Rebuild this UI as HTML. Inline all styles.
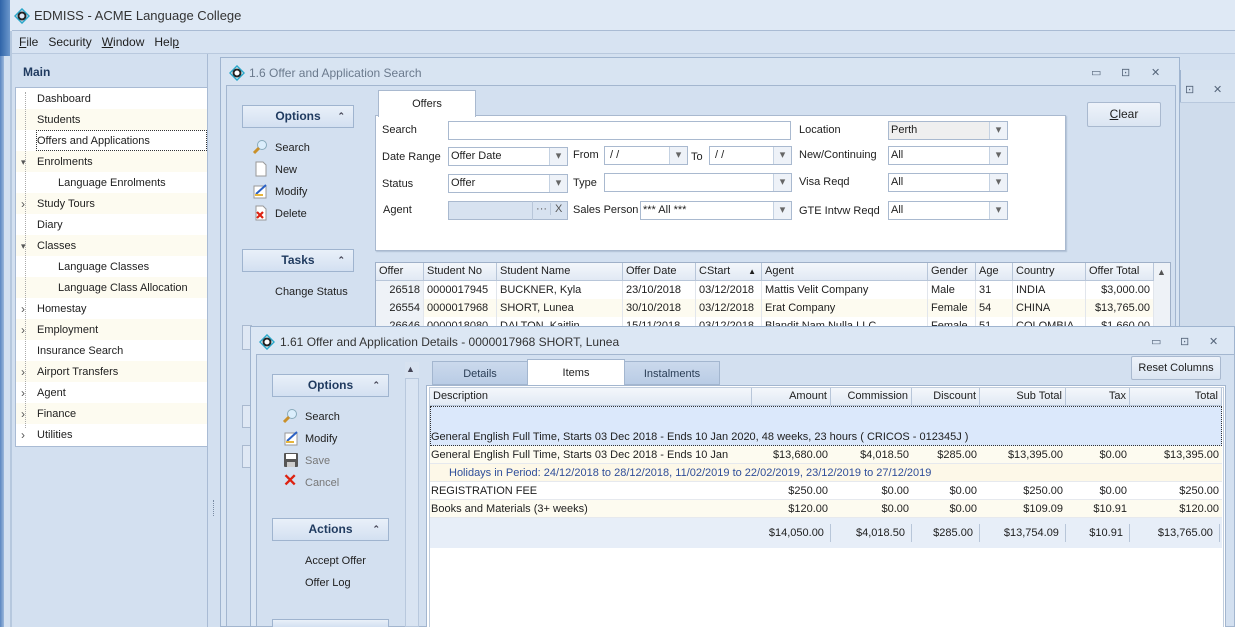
<!DOCTYPE html>
<html><head><meta charset="utf-8"><style>
*{box-sizing:border-box;margin:0;padding:0}
html{overflow:hidden;width:1235px;height:627px}
body{width:1235px;height:627px;overflow:hidden;background:#d3e0f0;font-family:"Liberation Sans",sans-serif;font-size:11px;color:#1e1e1e;position:relative}
.a{position:absolute;white-space:nowrap}
.t{position:absolute;white-space:nowrap;line-height:14px}
.hdr{position:absolute;background:linear-gradient(#e9f0f9,#d3e0f1);border:1px solid #9fb4cf;font-weight:bold;color:#1f3a5f;text-align:center;line-height:20px;font-size:12px}
.hdr span{position:absolute;right:8px;top:0;font-size:9px;color:#445}
.in{position:absolute;background:#fff;border:1px solid #a9b9cf;height:19px;line-height:17px;padding-left:2px}
.cb:after{content:"▾";position:absolute;right:0;top:0;width:17px;height:17px;border-left:1px solid #c5d2e2;background:#eef2f8;text-align:center;color:#666;font-size:11px}
.grid{position:absolute;background:#fff;border:1px solid #9fb0c8}
.gh{position:absolute;height:18px;line-height:17px;background:linear-gradient(#f4f7fb,#e1e9f4);border-right:1px solid #b8c6d9;border-bottom:1px solid #b8c6d9;padding:0 3px;overflow:hidden}
.c{position:absolute;height:18px;line-height:18px;padding:0 3px;border-right:1px solid #e2e6ec;overflow:hidden}
.r{text-align:right}
.icon{position:absolute;width:16px;height:16px}
.wb{position:absolute;color:#55657a;font-size:11px}
</style></head><body>
<div class="a" style="left:0;top:0;width:1235px;height:31px;background:#dfe9f5"></div>
<div class="a" style="left:0;top:0;width:10px;height:56px;background:linear-gradient(90deg,#2f64a8,#6b97cc)"></div>
<div class="a" style="left:0;top:56px;width:4px;height:571px;background:linear-gradient(90deg,#5a86c0,#9cb8dc)"></div>
<div class="a" style="left:10px;top:31px;width:2px;height:596px;background:#b6c8de"></div>
<svg class="a" style="left:14px;top:8px" width="16" height="16" viewBox="0 0 16 16"><path d="M8 1L15 8L8 15L1 8Z" fill="none" stroke="#2aa7c9" stroke-width="1.5"/><circle cx="8" cy="8" r="3.5" fill="none" stroke="#222" stroke-width="2"/></svg>
<div class="t" style="left:34px;top:9px;font-size:13px;color:#333">EDMISS - ACME Language College</div>
<div class="a" style="left:12px;top:30px;width:1223px;height:24px;background:#d7e3f2;border-top:1px solid #a9bbd4;border-bottom:1px solid #b9c9de"></div>
<div class="t" style="left:19px;top:35px;font-size:12px"><u>F</u>ile&nbsp;&nbsp; Security&nbsp;&nbsp; <u>W</u>indow&nbsp;&nbsp; Hel<u>p</u></div>
<div class="t" style="left:23px;top:65px;font-weight:bold;font-size:12px;color:#1f3a5f">Main</div>
<div class="a" style="left:15px;top:87px;width:193px;height:360px;background:#fff;border:1px solid #a9bbd4"></div>
<div class="a" style="left:16px;top:109px;width:191px;height:21px;background:#fdfbf0"></div>
<div class="a" style="left:16px;top:151px;width:191px;height:21px;background:#fdfbf0"></div>
<div class="a" style="left:16px;top:193px;width:191px;height:21px;background:#fdfbf0"></div>
<div class="a" style="left:16px;top:235px;width:191px;height:21px;background:#fdfbf0"></div>
<div class="a" style="left:16px;top:277px;width:191px;height:21px;background:#fdfbf0"></div>
<div class="a" style="left:16px;top:319px;width:191px;height:21px;background:#fdfbf0"></div>
<div class="a" style="left:16px;top:361px;width:191px;height:21px;background:#fdfbf0"></div>
<div class="a" style="left:16px;top:403px;width:191px;height:21px;background:#fdfbf0"></div>
<div class="a" style="left:25px;top:92px;width:0;height:336px;border-left:1px dotted #aaa"></div>
<div class="a" style="left:36px;top:130px;width:171px;height:21px;border:1px dotted #333"></div>
<div class="t" style="left:37px;top:92px">Dashboard</div>
<div class="t" style="left:37px;top:113px">Students</div>
<div class="t" style="left:37px;top:134px">Offers and Applications</div>
<div class="t" style="left:37px;top:155px">Enrolments</div>
<div class="t" style="left:58px;top:176px">Language Enrolments</div>
<div class="t" style="left:37px;top:197px">Study Tours</div>
<div class="t" style="left:37px;top:218px">Diary</div>
<div class="t" style="left:37px;top:239px">Classes</div>
<div class="t" style="left:58px;top:260px">Language Classes</div>
<div class="t" style="left:58px;top:281px">Language Class Allocation</div>
<div class="t" style="left:37px;top:302px">Homestay</div>
<div class="t" style="left:37px;top:323px">Employment</div>
<div class="t" style="left:37px;top:344px">Insurance Search</div>
<div class="t" style="left:37px;top:365px">Airport Transfers</div>
<div class="t" style="left:37px;top:386px">Agent</div>
<div class="t" style="left:37px;top:407px">Finance</div>
<div class="t" style="left:37px;top:428px">Utilities</div>
<div class="t" style="left:21px;top:155px;font-size:9px;color:#555">▾</div>
<div class="t" style="left:21px;top:239px;font-size:9px;color:#555">▾</div>
<div class="t" style="left:21px;top:197px;font-size:12px;color:#555">›</div>
<div class="t" style="left:21px;top:302px;font-size:12px;color:#555">›</div>
<div class="t" style="left:21px;top:323px;font-size:12px;color:#555">›</div>
<div class="t" style="left:21px;top:365px;font-size:12px;color:#555">›</div>
<div class="t" style="left:21px;top:386px;font-size:12px;color:#555">›</div>
<div class="t" style="left:21px;top:407px;font-size:12px;color:#555">›</div>
<div class="t" style="left:21px;top:428px;font-size:12px;color:#555">›</div>
<div class="a" style="left:207px;top:54px;width:1px;height:573px;background:#a9bbd4"></div>
<div class="a" style="left:213px;top:500px;width:1px;height:16px;border-left:1px dotted #7a8ba3"></div>
<div class="a" style="left:1180px;top:70px;width:55px;height:557px;background:#d6e2f0;border-left:1px solid #9fb4cf"></div>
<div class="wb" style="left:1185px;top:83px">⊡</div><div class="wb" style="left:1213px;top:83px">✕</div>
<div class="a" style="left:1180px;top:102px;width:55px;height:525px;border-top:1px solid #b8c8dd;background:#cfdcec"></div>
<div class="a" style="left:220px;top:57px;width:960px;height:570px;background:#d8e4f2;border:1px solid #9fb4cf"></div>
<svg class="a" style="left:229px;top:65px" width="16" height="16" viewBox="0 0 16 16"><path d="M8 1L15 8L8 15L1 8Z" fill="#fff" stroke="#2aa7c9" stroke-width="1.5"/><circle cx="8" cy="8" r="3.5" fill="none" stroke="#222" stroke-width="2"/></svg>
<div class="t" style="left:249px;top:66px;color:#6b7a8d;font-size:12px">1.6 Offer and Application Search</div>
<div class="wb" style="left:1091px;top:66px">▭</div><div class="wb" style="left:1121px;top:66px">⊡</div><div class="wb" style="left:1151px;top:66px">✕</div>
<div class="a" style="left:226px;top:85px;width:950px;height:542px;background:#d3e0f0;border:1px solid #a3b6cf"></div>
<div class="hdr" style="left:242px;top:105px;width:112px;height:23px">Options<span>⌃</span></div>
<svg class="icon" style="left:252px;top:139px" viewBox="0 0 16 16"><circle cx="10" cy="6" r="4.5" fill="#dbeefc" stroke="#8ab" /><path d="M7 9L2 14" stroke="#c9902a" stroke-width="3"/></svg>
<div class="t" style="left:275px;top:141px">Search</div>
<svg class="icon" style="left:253px;top:161px" viewBox="0 0 16 16"><path d="M3 1H10L13 4V15H3Z" fill="#fff" stroke="#999"/></svg>
<div class="t" style="left:275px;top:163px">New</div>
<svg class="icon" style="left:253px;top:183px" viewBox="0 0 16 16"><rect x="1" y="3" width="12" height="12" fill="#fff" stroke="#999"/><path d="M3 11L13 2" stroke="#2b62c5" stroke-width="2"/><path d="M2 12H10" stroke="#e6b53b" stroke-width="2"/></svg>
<div class="t" style="left:275px;top:185px">Modify</div>
<svg class="icon" style="left:253px;top:205px" viewBox="0 0 16 16"><path d="M3 1H10L13 4V15H3Z" fill="#fff" stroke="#999"/><path d="M4 7L10 13M10 7L4 13" stroke="#d21" stroke-width="2.2"/></svg>
<div class="t" style="left:275px;top:207px">Delete</div>
<div class="hdr" style="left:242px;top:249px;width:112px;height:23px">Tasks<span>⌃</span></div>
<div class="t" style="left:275px;top:285px">Change Status</div>
<div class="a" style="left:375px;top:115px;width:691px;height:136px;background:#fff;border:1px solid #a9b9cf;box-shadow:1px 1px 1px #b0c0d5"></div>
<div class="a" style="left:378px;top:90px;width:98px;height:27px;background:#fff;border:1px solid #a9b9cf;border-bottom:none;text-align:center;line-height:26px">Offers</div>
<div class="t" style="left:382px;top:123px">Search</div>
<div class="in" style="left:448px;top:121px;width:343px"></div>
<div class="t" style="left:382px;top:150px">Date Range</div>
<div class="in cb" style="left:448px;top:147px;width:120px">Offer Date</div>
<div class="t" style="left:573px;top:148px">From</div>
<div class="in cb" style="left:604px;top:146px;width:84px">&nbsp;/ /</div>
<div class="t" style="left:691px;top:150px">To</div>
<div class="in cb" style="left:709px;top:146px;width:83px">&nbsp;/ /</div>
<div class="t" style="left:382px;top:177px">Status</div>
<div class="in cb" style="left:448px;top:174px;width:120px">Offer</div>
<div class="t" style="left:573px;top:176px">Type</div>
<div class="in cb" style="left:604px;top:173px;width:188px"></div>
<div class="t" style="left:383px;top:203px">Agent</div>
<div class="a" style="left:448px;top:201px;width:120px;height:19px;background:#d7e2f0;border:1px solid #a9b9cf"></div>
<div class="a" style="left:532px;top:201px;width:36px;height:19px;border-left:1px solid #b8c6d9;font-size:11px;line-height:17px;color:#555">&nbsp;···<span style="border-left:1px solid #b8c6d9;padding-left:4px;margin-left:3px">X</span></div>
<div class="t" style="left:573px;top:203px">Sales Person</div>
<div class="in cb" style="left:640px;top:201px;width:152px">*** All ***</div>
<div class="t" style="left:799px;top:123px">Location</div>
<div class="in cb" style="left:888px;top:121px;width:120px;background:#efefef">Perth</div>
<div class="t" style="left:799px;top:148px">New/Continuing</div>
<div class="in cb" style="left:888px;top:146px;width:120px">All</div>
<div class="t" style="left:799px;top:175px">Visa Reqd</div>
<div class="in cb" style="left:888px;top:173px;width:120px">All</div>
<div class="t" style="left:799px;top:204px">GTE Intvw Reqd</div>
<div class="in cb" style="left:888px;top:201px;width:120px">All</div>
<div class="a" style="left:1087px;top:102px;width:74px;height:25px;background:linear-gradient(#eef3fa,#dbe5f2);border:1px solid #a9b9cf;border-radius:2px;text-align:center;line-height:23px;font-size:12px"><u>C</u>lear</div>
<div class="grid" style="left:375px;top:262px;width:796px;height:70px"></div>
<div class="a" style="left:1154px;top:263px;width:16px;height:65px;background:#eef2f7"></div>
<div class="t" style="left:1157px;top:265px;font-size:9px;color:#555">▲</div>
<div class="gh" style="left:376px;top:263px;width:48px">Offer No</div>
<div class="gh" style="left:424px;top:263px;width:73px">Student No</div>
<div class="gh" style="left:497px;top:263px;width:126px">Student Name</div>
<div class="gh" style="left:623px;top:263px;width:73px">Offer Date</div>
<div class="gh" style="left:696px;top:263px;width:66px">CStart<span style="position:absolute;right:5px;font-size:8px">▲</span></div>
<div class="gh" style="left:762px;top:263px;width:166px">Agent</div>
<div class="gh" style="left:928px;top:263px;width:48px">Gender</div>
<div class="gh" style="left:976px;top:263px;width:37px">Age</div>
<div class="gh" style="left:1013px;top:263px;width:73px">Country</div>
<div class="gh" style="left:1086px;top:263px;width:68px">Offer Total</div>
<div class="a" style="left:376px;top:281px;width:778px;height:18px;background:#fff"></div>
<div class="a" style="left:376px;top:299px;width:778px;height:18px;background:#fdfbf0"></div>
<div class="a" style="left:376px;top:281px;width:48px;height:45px;background:#eef2f7"></div>
<div class="c r" style="left:376px;top:281px;width:48px">26518</div><div class="c" style="left:424px;top:281px;width:73px">0000017945</div><div class="c" style="left:497px;top:281px;width:126px">BUCKNER, Kyla</div><div class="c" style="left:623px;top:281px;width:73px">23/10/2018</div><div class="c" style="left:696px;top:281px;width:66px">03/12/2018</div><div class="c" style="left:762px;top:281px;width:166px">Mattis Velit Company</div><div class="c" style="left:928px;top:281px;width:48px">Male</div><div class="c" style="left:976px;top:281px;width:37px">31</div><div class="c" style="left:1013px;top:281px;width:73px">INDIA</div><div class="c r" style="left:1086px;top:281px;width:68px">$3,000.00</div>
<div class="c r" style="left:376px;top:299px;width:48px">26554</div><div class="c" style="left:424px;top:299px;width:73px">0000017968</div><div class="c" style="left:497px;top:299px;width:126px">SHORT, Lunea</div><div class="c" style="left:623px;top:299px;width:73px">30/10/2018</div><div class="c" style="left:696px;top:299px;width:66px">03/12/2018</div><div class="c" style="left:762px;top:299px;width:166px">Erat Company</div><div class="c" style="left:928px;top:299px;width:48px">Female</div><div class="c" style="left:976px;top:299px;width:37px">54</div><div class="c" style="left:1013px;top:299px;width:73px">CHINA</div><div class="c r" style="left:1086px;top:299px;width:68px">$13,765.00</div>
<div class="c r" style="left:376px;top:317px;width:48px">26646</div><div class="c" style="left:424px;top:317px;width:73px">0000018080</div><div class="c" style="left:497px;top:317px;width:126px">DALTON, Kaitlin</div><div class="c" style="left:623px;top:317px;width:73px">15/11/2018</div><div class="c" style="left:696px;top:317px;width:66px">03/12/2018</div><div class="c" style="left:762px;top:317px;width:166px">Blandit Nam Nulla LLC</div><div class="c" style="left:928px;top:317px;width:48px">Female</div><div class="c" style="left:976px;top:317px;width:37px">51</div><div class="c" style="left:1013px;top:317px;width:73px">COLOMBIA</div><div class="c r" style="left:1086px;top:317px;width:68px">$1,660.00</div>
<div class="a" style="left:242px;top:325px;width:10px;height:25px;background:#dfe8f4;border:1px solid #a9b9cf"></div>
<div class="a" style="left:242px;top:405px;width:10px;height:23px;background:#dfe8f4;border:1px solid #a9b9cf"></div>
<div class="a" style="left:242px;top:445px;width:10px;height:23px;background:#dfe8f4;border:1px solid #a9b9cf"></div>
<div class="a" style="left:250px;top:326px;width:985px;height:301px;background:#dce7f4;border:1px solid #9fb4cf"></div>
<svg class="a" style="left:259px;top:334px" width="16" height="16" viewBox="0 0 16 16"><path d="M8 1L15 8L8 15L1 8Z" fill="#fff" stroke="#2aa7c9" stroke-width="1.5"/><circle cx="8" cy="8" r="3.5" fill="none" stroke="#222" stroke-width="2"/></svg>
<div class="t" style="left:280px;top:335px;color:#333;font-size:12px">1.61 Offer and Application Details - 0000017968 SHORT, Lunea</div>
<div class="wb" style="left:1151px;top:335px">▭</div><div class="wb" style="left:1180px;top:335px">⊡</div><div class="wb" style="left:1209px;top:335px">✕</div>
<div class="a" style="left:256px;top:354px;width:979px;height:273px;background:#d3e0f0;border:1px solid #a3b6cf"></div>
<div class="a" style="left:405px;top:362px;width:14px;height:265px;background:#d7e2f0"></div>
<div class="t" style="left:406px;top:362px;font-size:9px;color:#445">▲</div>
<div class="a" style="left:405px;top:378px;width:14px;height:249px;border:1px solid #b8c8dd;background:#d9e4f2"></div>
<div class="hdr" style="left:272px;top:374px;width:117px;height:23px">Options<span>⌃</span></div>
<svg class="icon" style="left:282px;top:408px" viewBox="0 0 16 16"><circle cx="10" cy="6" r="4.5" fill="#dbeefc" stroke="#8ab" /><path d="M7 9L2 14" stroke="#c9902a" stroke-width="3"/></svg>
<div class="t" style="left:305px;top:410px">Search</div>
<svg class="icon" style="left:284px;top:430px" viewBox="0 0 16 16"><rect x="1" y="3" width="12" height="12" fill="#fff" stroke="#999"/><path d="M3 11L13 2" stroke="#2b62c5" stroke-width="2"/><path d="M2 12H10" stroke="#e6b53b" stroke-width="2"/></svg>
<div class="t" style="left:305px;top:432px">Modify</div>
<svg class="icon" style="left:283px;top:452px" viewBox="0 0 16 16"><rect x="1" y="1" width="14" height="14" rx="1" fill="#555"/><rect x="3" y="2" width="10" height="5" fill="#fff"/><rect x="4" y="10" width="8" height="5" fill="#ccc"/></svg>
<div class="t" style="left:305px;top:454px;color:#777">Save</div>
<div class="t" style="left:283px;top:472px;color:#d21;font-size:17px;font-weight:bold;line-height:18px">✕</div>
<div class="t" style="left:305px;top:476px;color:#777">Cancel</div>
<div class="hdr" style="left:272px;top:518px;width:117px;height:23px">Actions<span>⌃</span></div>
<div class="t" style="left:305px;top:554px">Accept Offer</div>
<div class="t" style="left:305px;top:576px">Offer Log</div>
<div class="hdr" style="left:272px;top:619px;width:117px;height:8px;border-bottom:none"></div>
<div class="a" style="left:432px;top:361px;width:96px;height:24px;background:linear-gradient(#cbd9ec,#b9cce5);border:1px solid #a3b6cf;text-align:center;line-height:24px;color:#2a3d55">Details</div>
<div class="a" style="left:527px;top:359px;width:98px;height:27px;background:#fff;border:1px solid #a3b6cf;border-bottom:none;text-align:center;line-height:26px">Items</div>
<div class="a" style="left:624px;top:361px;width:96px;height:24px;background:linear-gradient(#cbd9ec,#b9cce5);border:1px solid #a3b6cf;text-align:center;line-height:24px;color:#2a3d55">Instalments</div>
<div class="a" style="left:1131px;top:356px;width:90px;height:24px;background:linear-gradient(#eef3fa,#dbe5f2);border:1px solid #a9b9cf;border-radius:2px;text-align:center;line-height:22px">Reset Columns</div>
<div class="a" style="left:426px;top:385px;width:800px;height:242px;background:#fff;border:1px solid #a3b6cf;border-bottom:none"></div>
<div class="a" style="left:429px;top:387px;width:795px;height:240px;background:#fff;border:1px solid #c0cddd;border-bottom:none"></div>
<div class="gh" style="left:430px;top:388px;width:322px">Description</div>
<div class="gh r" style="left:752px;top:388px;width:79px">Amount</div>
<div class="gh r" style="left:831px;top:388px;width:81px">Commission</div>
<div class="gh r" style="left:912px;top:388px;width:68px">Discount</div>
<div class="gh r" style="left:980px;top:388px;width:86px">Sub Total</div>
<div class="gh r" style="left:1066px;top:388px;width:64px">Tax</div>
<div class="gh r" style="left:1130px;top:388px;width:92px">Total</div>
<div class="a" style="left:430px;top:406px;width:792px;height:40px;background:#dbe8fb;border:1px dotted #333"></div>
<div class="t" style="left:431px;top:430px">General English Full Time, Starts 03 Dec 2018 - Ends 10 Jan 2020, 48 weeks, 23 hours ( CRICOS - 012345J )</div>
<div class="a" style="left:430px;top:446px;width:792px;height:72px;background:#fff"></div>
<div class="a" style="left:430px;top:446px;width:792px;height:18px;background:#fdfbf0;border-bottom:1px solid #e6e9ee"></div>
<div class="a" style="left:430px;top:464px;width:792px;height:18px;background:#fdf8e8;border-bottom:1px solid #e6e9ee"></div>
<div class="a" style="left:430px;top:482px;width:792px;height:18px;border-bottom:1px solid #e6e9ee"></div>
<div class="a" style="left:430px;top:500px;width:792px;height:18px;background:#fdfbf0;border-bottom:1px solid #e6e9ee"></div>
<div class="c" style="left:428px;top:446px;width:324px;border:none">General English Full Time, Starts 03 Dec 2018 - Ends 10 Jan 2020,</div>
<div class="c r" style="left:752px;top:446px;width:79px;border:none">$13,680.00</div><div class="c r" style="left:831px;top:446px;width:81px;border:none">$4,018.50</div><div class="c r" style="left:912px;top:446px;width:68px;border:none">$285.00</div><div class="c r" style="left:980px;top:446px;width:86px;border:none">$13,395.00</div><div class="c r" style="left:1066px;top:446px;width:64px;border:none">$0.00</div><div class="c r" style="left:1130px;top:446px;width:92px;border:none">$13,395.00</div>
<div class="c" style="left:446px;top:464px;width:700px;border:none;color:#2f4e9a">Holidays in Period: 24/12/2018 to 28/12/2018, 11/02/2019 to 22/02/2019, 23/12/2019 to 27/12/2019</div>
<div class="c" style="left:428px;top:482px;width:324px;border:none">REGISTRATION FEE</div>
<div class="c r" style="left:752px;top:482px;width:79px;border:none">$250.00</div><div class="c r" style="left:831px;top:482px;width:81px;border:none">$0.00</div><div class="c r" style="left:912px;top:482px;width:68px;border:none">$0.00</div><div class="c r" style="left:980px;top:482px;width:86px;border:none">$250.00</div><div class="c r" style="left:1066px;top:482px;width:64px;border:none">$0.00</div><div class="c r" style="left:1130px;top:482px;width:92px;border:none">$250.00</div>
<div class="c" style="left:428px;top:500px;width:324px;border:none">Books and Materials (3+ weeks)</div>
<div class="c r" style="left:752px;top:500px;width:79px;border:none">$120.00</div><div class="c r" style="left:831px;top:500px;width:81px;border:none">$0.00</div><div class="c r" style="left:912px;top:500px;width:68px;border:none">$0.00</div><div class="c r" style="left:980px;top:500px;width:86px;border:none">$109.09</div><div class="c r" style="left:1066px;top:500px;width:64px;border:none">$10.91</div><div class="c r" style="left:1130px;top:500px;width:92px;border:none">$120.00</div>
<div class="a" style="left:430px;top:518px;width:792px;height:30px;background:#e7eef8"></div>
<div class="c r" style="left:740px;top:524px;width:91px;border-right:1px solid #b8c6d9">$14,050.00&nbsp;</div><div class="c r" style="left:831px;top:524px;width:81px;border-right:1px solid #b8c6d9">$4,018.50&nbsp;</div><div class="c r" style="left:912px;top:524px;width:68px;border-right:1px solid #b8c6d9">$285.00&nbsp;</div><div class="c r" style="left:980px;top:524px;width:86px;border-right:1px solid #b8c6d9">$13,754.09&nbsp;</div><div class="c r" style="left:1066px;top:524px;width:64px;border-right:1px solid #b8c6d9">$10.91&nbsp;</div><div class="c r" style="left:1130px;top:524px;width:90px;border-right:1px solid #b8c6d9">$13,765.00&nbsp;</div>
</body></html>
